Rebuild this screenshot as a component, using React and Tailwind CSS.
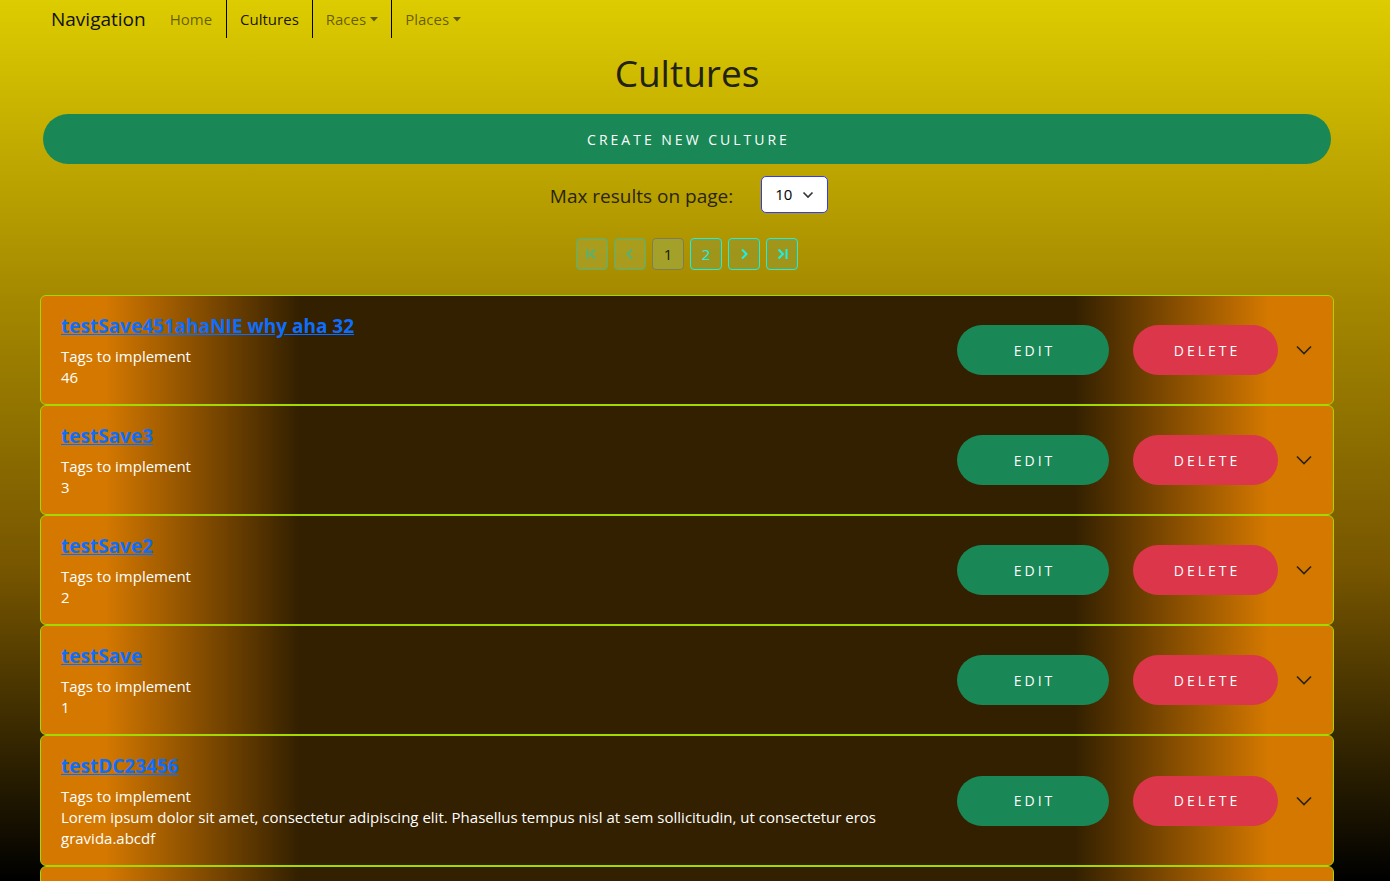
import React from "react";

const cards = [
  { title: "testSave451ahaNIE why aha 32", lines: ["Tags to implement", "46"] },
  { title: "testSave3", lines: ["Tags to implement", "3"] },
  { title: "testSave2", lines: ["Tags to implement", "2"] },
  { title: "testSave", lines: ["Tags to implement", "1"] },
  {
    title: "testDC23456",
    lines: [
      "Tags to implement",
      "Lorem ipsum dolor sit amet, consectetur adipiscing elit. Phasellus tempus nisl at sem sollicitudin, ut consectetur eros gravida.abcdf",
    ],
  },
];

const cardCls =
  "rounded-[6px] border border-[#a3d900] bg-[linear-gradient(to_right,#d47800_5%,#332000_20%,#332000_80%,#d47800_95%)]";

function Caret() {
  return (
    <svg width="8" height="5" viewBox="0 0 8 5" className="ml-[4px] mt-[1px]">
      <path d="M0 0h8L4 4.5z" fill="currentColor" />
    </svg>
  );
}

function Chevron({ className = "" }) {
  return (
    <svg width="16" height="10" viewBox="0 0 16 10" className={className}>
      <path d="M1 1.5l7 7 7-7" fill="none" stroke="#2a2212" strokeWidth="1.6" />
    </svg>
  );
}

function PageBtn({ variant, children }) {
  const styles = {
    disabled: "border-[#52b57c] text-[#4fb47a] bg-[#a8a02a]/70",
    active: "border-[#7f7d55] text-[#1a1a00] bg-[#a3a12a]",
    normal: "border-[#19f0e8] text-[#19f0e8] bg-[#9c9622]/80",
  };
  return (
    <div
      className={`flex h-[32px] w-[32px] items-center justify-center rounded-[4px] border text-[15px] ${styles[variant]}`}
    >
      {children}
    </div>
  );
}

export default function App() {
  return (
    <div className="h-screen w-full overflow-hidden bg-[linear-gradient(to_bottom,#ddcc00_0%,#a48800_34%,#765500_65%,#000000_100%)] font-['Open_Sans','Noto_Sans',sans-serif]">
      <nav className="flex h-[38px] items-stretch pl-[51px]">
        <span className="mr-[10px] self-center text-[19px] text-[#111]">Navigation</span>
        <a className="flex items-center px-[14px] text-[15px] text-black/55">Home</a>
        <a className="flex items-center border-l border-black px-[13px] text-[15px] text-black/90">Cultures</a>
        <a className="flex items-center border-l border-black px-[13px] text-[15px] text-black/55">
          Races
          <Caret />
        </a>
        <a className="flex items-center border-l border-black px-[13px] text-[15px] text-black/55">
          Places
          <Caret />
        </a>
      </nav>

      <div className="ml-[43px] mr-[59px]">
        <h1 className="mt-[11px] mb-[17px] text-center text-[37px] leading-[48px] text-[#222215]">Cultures</h1>
        <button className="flex h-[50px] w-full items-center justify-center rounded-full bg-[#198856] pl-[3px] text-[14px] tracking-[3px] text-white">
          CREATE NEW CULTURE
        </button>
        <div className="mt-[12px] flex items-center justify-center pl-[4px]">
          <span className="mt-[4px] mr-[28px] text-[19px] text-[#2a2510]">Max results on page:</span>
          <div className="flex h-[37px] w-[67px] items-center rounded-[5px] border border-[#2f3cff] bg-white pl-[13px]">
            <span className="text-[15px] text-black">10</span>
            <svg width="12" height="8" viewBox="0 0 12 8" className="ml-[10px]">
              <path d="M1.5 1.5l4.5 4.5 4.5-4.5" fill="none" stroke="#333" strokeWidth="1.6" />
            </svg>
          </div>
        </div>
        <div className="mt-[25px] flex justify-center gap-[6px]">
          <PageBtn variant="disabled">
            <svg width="14" height="12" viewBox="0 0 14 12">
              <path d="M2.5 1v10" stroke="currentColor" strokeWidth="2" />
              <path d="M10 1.5L5.5 6l4.5 4.5" fill="none" stroke="currentColor" strokeWidth="2" />
            </svg>
          </PageBtn>
          <PageBtn variant="disabled">
            <svg width="10" height="12" viewBox="0 0 10 12">
              <path d="M7 1.5L2.5 6 7 10.5" fill="none" stroke="currentColor" strokeWidth="2" />
            </svg>
          </PageBtn>
          <PageBtn variant="active">1</PageBtn>
          <PageBtn variant="normal">2</PageBtn>
          <PageBtn variant="normal">
            <svg width="10" height="12" viewBox="0 0 10 12">
              <path d="M3 1.5L7.5 6 3 10.5" fill="none" stroke="currentColor" strokeWidth="2" />
            </svg>
          </PageBtn>
          <PageBtn variant="normal">
            <svg width="14" height="12" viewBox="0 0 14 12">
              <path d="M3.5 1.5L8 6l-4.5 4.5" fill="none" stroke="currentColor" strokeWidth="2" />
              <path d="M11.5 1v10" stroke="currentColor" strokeWidth="2" />
            </svg>
          </PageBtn>
        </div>
      </div>

      <div className="ml-[40px] mr-[56px] mt-[25px]">
        {cards.map((c, i) => (
          <div key={i} className={`flex items-center py-[16px] pr-[21px] pl-[20px] ${cardCls}`}>
            <div className="mr-[40px] min-w-0 flex-1">
              <a className="mb-[6px] block text-[19px] leading-[28px] font-bold text-[#0d6efd] underline">
                {c.title}
              </a>
              {c.lines.map((l, j) => (
                <div key={j} className="text-[15px] leading-[21px] text-white">
                  {l}
                </div>
              ))}
            </div>
            <button className="flex h-[50px] w-[152px] shrink-0 items-center justify-center rounded-full bg-[#198856] pl-[3px] text-[14px] tracking-[3px] text-white">
              EDIT
            </button>
            <button className="ml-[24px] flex h-[50px] w-[145px] shrink-0 items-center justify-center rounded-full bg-[#dc364a] pl-[3px] text-[14px] tracking-[3px] text-white">
              DELETE
            </button>
            <Chevron className="ml-[18px] shrink-0" />
          </div>
        ))}
        <div className={`h-[110px] ${cardCls}`} />
      </div>
    </div>
  );
}
